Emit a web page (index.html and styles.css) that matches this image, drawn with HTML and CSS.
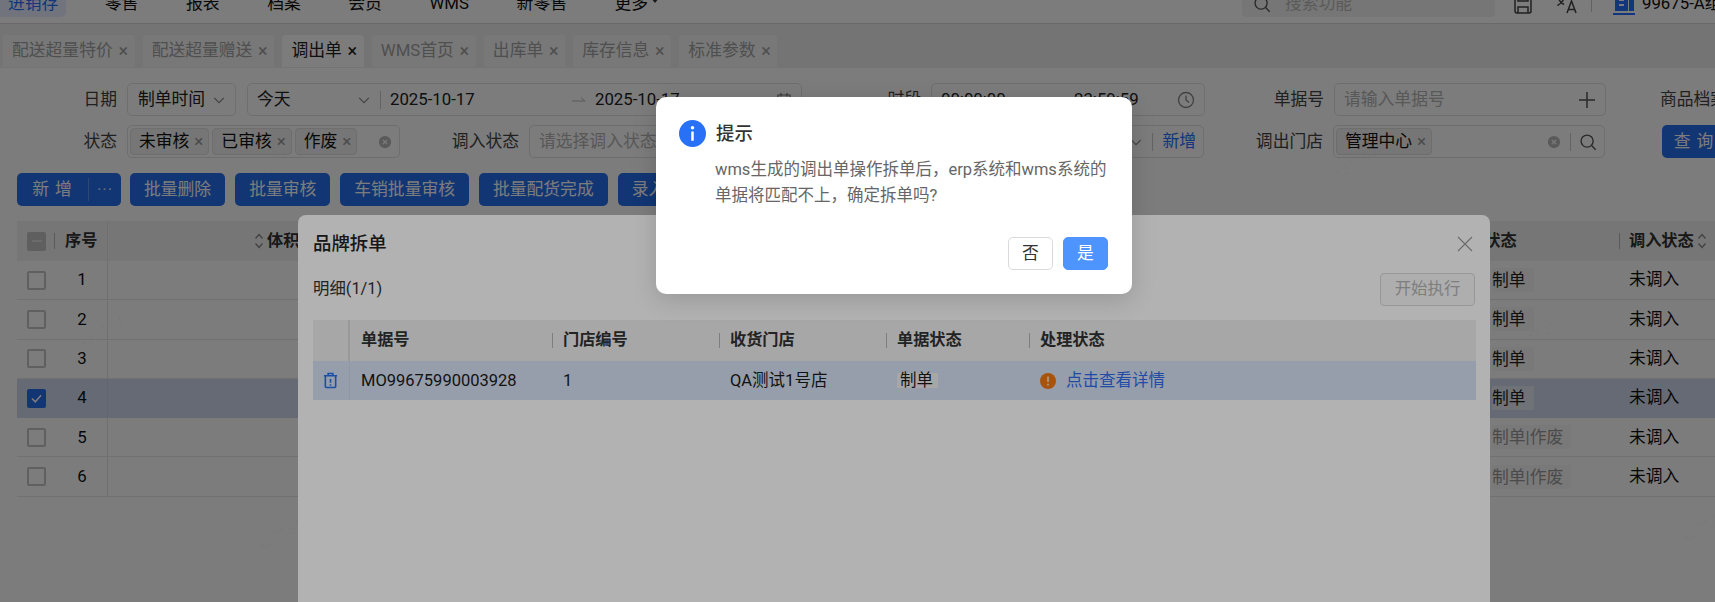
FILE: index.html
```html
<!DOCTYPE html>
<html lang="zh-CN">
<head>
<meta charset="utf-8">
<title>调出单</title>
<link rel="stylesheet" href="styles.css">
</head>
<body>
<svg class="defs" width="0" height="0">
  <symbol id="chev" viewBox="0 0 16 16"><path d="M2.5 5.5 8 11l5.5-5.5" fill="none" stroke="currentColor" stroke-width="1.3"/></symbol>
  <symbol id="sort" viewBox="0 0 10 18"><path d="M1.5 6.5 5 2.5l3.500 4M1.500 11.500 5 15.500l3.500-4" fill="none" stroke="currentColor" stroke-width="1.300"/></symbol>
  <symbol id="clear" viewBox="0 0 16 16"><circle cx="8" cy="8" r="7" fill="currentColor"/><path d="M5.500 5.500l5 5m0-5l-5 5" stroke="#fff" stroke-width="1.400"/></symbol>
  <symbol id="search" viewBox="0 0 20 20"><circle cx="9" cy="9" r="6.700" fill="none" stroke="currentColor" stroke-width="1.500"/><path d="M14 14l4.500 4.500" stroke="currentColor" stroke-width="1.500"/></symbol>
</svg>

<div class="app">
  <header class="nav">
    <nav class="menu">
      <a class="menu-item active">进销存</a>
      <a class="menu-item">零售</a>
      <a class="menu-item">报表</a>
      <a class="menu-item">档案</a>
      <a class="menu-item">会员</a>
      <a class="menu-item">WMS</a>
      <a class="menu-item">新零售</a>
      <a class="menu-item">更多<span class="caret"></span></a>
    </nav>
    <div class="nav-right">
      <div class="search-box"><svg class="ic18 c-dark"><use href="#search"/></svg><span>搜索功能</span></div>
      <svg class="nav-ic" viewBox="0 0 22 22"><path d="M3 3h16v15a2 2 0 0 1-2 2H5a2 2 0 0 1-2-2z M6 20v-6h10v6 M6 3v5h10V3" fill="none" stroke="currentColor" stroke-width="1.500"/></svg>
      <svg class="nav-ic tight" viewBox="0 0 22 22"><path d="M1 5h9M5.500 2v3M8 5c-1 4-3.500 6-6.500 7.500M3 6.500c1 2.500 3 4 5 5M11 20l4.500-12L20 20M12.500 16.500h6" fill="none" stroke="currentColor" stroke-width="1.500"/></svg>
      <span class="nav-sep"></span>
      <svg class="nav-ic blue" viewBox="0 0 22 22"><path d="M2 1h13v17H2zM16 7h5v11h-5zM0 20h22v2H0z" fill="currentColor"/><path d="M6 6h5v2H6zM6 11h5v2H6z" fill="#fff"/></svg>
      <span class="org">99675-A组织管理中心</span>
    </div>
  </header>

  <div class="tabs">
    <div class="tab">配送超量特价<i>×</i></div>
    <div class="tab">配送超量赠送<i>×</i></div>
    <div class="tab current">调出单<i>×</i></div>
    <div class="tab">WMS首页<i>×</i></div>
    <div class="tab">出库单<i>×</i></div>
    <div class="tab">库存信息<i>×</i></div>
    <div class="tab">标准参数<i>×</i></div>
  </div>

  <main class="content">
    <section class="filters">
      <div class="row">
        <label class="lab lab-first">日期</label>
        <div class="ctl w-select"><span class="grow">制单时间</span><svg class="ic14"><use href="#chev"/></svg></div>
        <div class="ctl w-range">
          <span class="range-pre">今天</span><svg class="ic14"><use href="#chev"/></svg><span class="vsep"></span>
          <span class="date">2025-10-17</span>
          <svg class="arrow" viewBox="0 0 14 8"><path d="M0 5h13L9 1.500" fill="none" stroke="currentColor"/></svg>
          <span class="date grow">2025-10-17</span>
          <svg class="ic16" viewBox="0 0 16 16"><path d="M2 3h12v11H2zM2 6.500h12M5 1v3.500M11 1v3.500" fill="none" stroke="currentColor" stroke-width="1.200"/></svg>
        </div>
        <label class="lab lab-118">时段</label>
        <div class="ctl w-time">
          <span class="time-a">00:00:00</span><span class="grow">23:59:59</span>
          <svg class="ic18" viewBox="0 0 18 18"><circle cx="9" cy="9" r="7.500" fill="none" stroke="currentColor" stroke-width="1.300"/><path d="M9 4.500V9l3 2.500" fill="none" stroke="currentColor" stroke-width="1.300"/></svg>
        </div>
        <label class="lab lab-118">单据号</label>
        <div class="ctl w-doc">
          <span class="grow ph">请输入单据号</span>
          <svg class="ic18 c-dark" viewBox="0 0 18 18"><path d="M9 1v16M1 9h16" stroke="currentColor" stroke-width="1.500"/></svg>
        </div>
        <label class="lab lab-end">商品档案</label>
      </div>
      <div class="row">
        <label class="lab lab-first">状态</label>
        <div class="ctl w-status tagged">
          <span class="chip">未审核<i>×</i></span><span class="chip">已审核<i>×</i></span><span class="chip">作废<i>×</i></span>
          <span class="grow"></span>
          <svg class="ic14 c-clear"><use href="#clear"/></svg>
        </div>
        <label class="lab lab-118">调入状态</label>
        <div class="ctl w-in">
          <span class="grow ph">请选择调入状态</span>
          <svg class="ic14"><use href="#chev"/></svg><span class="vsep"></span><span class="link">新增</span>
        </div>
        <label class="lab lab-118">调出门店</label>
        <div class="ctl w-doc tagged">
          <span class="chip">管理中心<i>×</i></span>
          <span class="grow"></span>
          <svg class="ic14 c-clear"><use href="#clear"/></svg><span class="vsep vsep-tight"></span>
          <svg class="ic18 c-dark"><use href="#search"/></svg>
        </div>
        <button class="btn query">查 询</button>
      </div>
    </section>

    <section class="toolbar">
      <div class="btn split"><span class="split-main">新 增</span><span class="split-more">···</span></div>
      <button class="btn">批量删除</button>
      <button class="btn">批量审核</button>
      <button class="btn">车销批量审核</button>
      <button class="btn">批量配货完成</button>
      <button class="btn">录入物流单号</button>
    </section>

    <section class="grid">
      <div class="g-row g-head">
        <div class="g-first"><span class="box partial"></span><span class="head-sep"></span><b>序号</b></div>
        <div class="g-main"><svg class="sort"><use href="#sort"/></svg><b>体积</b></div>
        <div class="g-status"><b>单据状态</b></div>
        <div class="g-in"><span class="head-sep"></span><b>调入状态</b><svg class="sort"><use href="#sort"/></svg></div>
      </div>
      <div class="g-row"><div class="g-first"><span class="box"></span><span class="num">1</span></div><div class="g-main"></div><div class="g-status"><span class="st">制单</span></div><div class="g-in"><span class="in-val">未调入</span></div></div>
      <div class="g-row"><div class="g-first"><span class="box"></span><span class="num">2</span></div><div class="g-main"></div><div class="g-status"><span class="st">制单</span></div><div class="g-in"><span class="in-val">未调入</span></div></div>
      <div class="g-row"><div class="g-first"><span class="box"></span><span class="num">3</span></div><div class="g-main"></div><div class="g-status"><span class="st">制单</span></div><div class="g-in"><span class="in-val">未调入</span></div></div>
      <div class="g-row selected"><div class="g-first"><span class="box checked"><svg viewBox="0 0 18 18"><path d="M3.500 9l4 4 7-8" fill="none" stroke="#fff" stroke-width="1.800"/></svg></span><span class="num">4</span></div><div class="g-main"></div><div class="g-status"><span class="st">制单</span></div><div class="g-in"><span class="in-val">未调入</span></div></div>
      <div class="g-row"><div class="g-first"><span class="box"></span><span class="num">5</span></div><div class="g-main"></div><div class="g-status"><span class="st void">制单|作废</span></div><div class="g-in"><span class="in-val">未调入</span></div></div>
      <div class="g-row"><div class="g-first"><span class="box"></span><span class="num">6</span></div><div class="g-main"></div><div class="g-status"><span class="st void">制单|作废</span></div><div class="g-in"><span class="in-val">未调入</span></div></div>
    </section>
  </main>

  <div class="marks">
    <span class="wm m1">xz71547</span><span class="wm m2">xz71547</span><span class="wm m3">xz71547</span>
    <span class="wm m4">xz71547</span><span class="wm m5">xz71547</span><span class="wm m6">xz71547</span>
    <span class="wm m7">xz71547</span>
  </div>
</div>

<div class="overlay"></div>

<section class="modal">
  <header class="modal-head">
    <h2>品牌拆单</h2>
    <svg class="modal-x" viewBox="0 0 16 16"><path d="M1 1l14 14M15 1 1 15" stroke="currentColor" stroke-width="1.100"/></svg>
  </header>
  <div class="modal-bar">
    <span>明细(1/1)</span>
    <button class="btn-disabled">开始执行</button>
  </div>
  <div class="sub">
    <div class="s-row s-head">
      <div class="s-op"></div>
      <div class="s-c1">单据号</div>
      <div class="s-c2 div">门店编号</div>
      <div class="s-c3 div">收货门店</div>
      <div class="s-c4 div">单据状态</div>
      <div class="s-c5 div">处理状态</div>
    </div>
    <div class="s-row s-body">
      <div class="s-op">
        <svg class="trash" viewBox="0 0 16 18"><path d="M1 4h14M5.500 4V1.500h5V4M2.500 4v11.500a1 1 0 0 0 1 1h9a1 1 0 0 0 1-1V4M8 7.500v4M8 13v1.500" fill="none" stroke="currentColor" stroke-width="1.700"/></svg>
      </div>
      <div class="s-c1">MO99675990003928</div>
      <div class="s-c2">1</div>
      <div class="s-c3">QA测试1号店</div>
      <div class="s-c4"><span class="st-sub">制单</span></div>
      <div class="s-c5">
        <svg class="warn" viewBox="0 0 16 16"><circle cx="8" cy="8" r="8" fill="currentColor"/><path d="M8 3.500v5.500M8 10.800v1.700" stroke="#fff" stroke-width="1.700" opacity=".75"/></svg>
        <span class="detail">点击查看详情</span>
      </div>
    </div>
  </div>
</section>

<div class="overlay"></div>

<section class="dialog">
  <header class="dialog-head">
    <svg class="info" viewBox="0 0 28 28"><circle cx="14" cy="14" r="14" fill="#2871f6"/><circle cx="14" cy="8" r="1.800" fill="#fff"/><path d="M14 12v9.500" stroke="#fff" stroke-width="2.600"/></svg>
    <h3>提示</h3>
  </header>
  <p class="dialog-body">wms生成的调出单操作拆单后，erp系统和wms系统的单据将匹配不上，确定拆单吗?</p>
  <footer class="dialog-foot">
    <button class="d-btn">否</button>
    <button class="d-btn primary">是</button>
  </footer>
  <span class="wm-d d1">xz71547</span>
  <span class="wm-d d2">xz71547</span>
</section>
</body>
</html>
```

FILE: styles.css
```css
* { box-sizing: border-box; }
html, body { margin: 0; height: 100%; }
body {
  width: 1715px;
  height: 602px;
  overflow: hidden;
  position: relative;
  background: #fff;
  font: 16.8px/1.4 Roboto, "Noto Sans CJK SC", sans-serif;
  color: #222;
}
.defs { position: absolute; }
svg { display: block; flex: none; }
i { font-style: normal; }
button { font: inherit; }

.app { margin-top: -16px; width: 1715px; white-space: nowrap; position: relative; height: 618px; overflow: hidden; }

/* nav */
.nav { height: 40px; display: flex; justify-content: space-between; border-bottom: 1px solid #d8d8d8; }
.menu { display: flex; align-items: center; height: 39px; }
.menu-item { display: flex; align-items: center; height: 100%; padding: 0 23.8px; color: #111; }
.menu-item.active { width: 66px; padding: 6px 0 0 8px; margin-right: 15px; height: 33px; align-self: flex-start; background: #eaf0ff; color: #2670ff; border-radius: 0 0 5px 0; }
.caret { width: 0; height: 0; margin-left: 3px; margin-top: -6px; border: 4px solid transparent; border-top: 5px solid #333; border-bottom: 0; }
.nav-right { display: flex; align-items: center; height: 39px; width: 473px; flex: none; }
.search-box { display: flex; align-items: center; gap: 14px; width: 253px; height: 33px; align-self: flex-start; padding: 6px 0 0 11px; margin-right: 17px; background: #f2f2f2; border-radius: 4px; color: #bbb; }
.ic18 { width: 18px; height: 18px; color: #888; }
.ic14 { width: 14px; height: 14px; color: #888; }
.ic16 { width: 16px; height: 16px; color: #777; }
.c-dark { color: #555; }
.c-clear { color: #bbb; }
.nav-ic { width: 22px; height: 22px; margin-right: 22px; color: #444; }
.nav-ic.tight { margin-right: 13px; }
.nav-ic.blue { color: #2670ff; margin-right: 7px; }
.nav-sep { width: 1px; height: 16px; background: #ccc; margin-right: 21px; }
.org { color: #111; width: 73px; overflow: hidden; }

/* tabs */
.tabs { height: 44px; background: #f0f0f0; display: flex; align-items: flex-end; gap: 8px; padding: 0 0 1px 3px; }
.tab { height: 32px; padding: 0 5px 0 9px; display: flex; align-items: center; background: #f8f8f8; border-radius: 4px 4px 0 0; color: #a3a3a3; }
.tab i { margin-left: 4px; width: 13px; font-size: 18px; text-align: center; }
.tab.current { background: #fff; color: #222; }
.tab.current i { color: #222; }

/* filters */
.content { padding: 15px 0 0 17px; }
.filters { display: flex; flex-direction: column; gap: 9px; }
.row { display: flex; height: 33px; align-items: stretch; }
.lab { display: flex; align-items: center; justify-content: flex-end; margin-right: 10px; color: #444; flex: none; }
.lab-first { width: 100px; }
.lab-118 { width: 119px; }
.lab-end { justify-content: flex-start; margin-left: 54px; }
.ctl { display: flex; align-items: center; height: 33px; border: 1px solid #e3e3e3; border-radius: 5px; padding: 0 9px; background: #fff; color: #222; flex: none; }
.grow { flex: 1; }
.ph { color: #b5b5b5; }
.w-select { width: 109px; margin-right: 11px; padding-left: 10px; }
.w-range { width: 555px; }
.range-pre { width: 100px; }
.vsep { width: 1px; height: 18px; background: #ccc; margin: 0 9px; }
.vsep-tight { margin: 0 5px 0 6px; }
.date { width: 176px; }
.arrow { width: 14px; height: 8px; color: #bbb; margin: 0 9px 0 6px; }
.w-range .date:first-of-type { width: 192px; }
.w-time { width: 274px; }
.time-a { width: 133px; }
.w-doc { width: 272px; }
.w-status { width: 273px; }
.tagged { padding: 0 7px 0 2px; gap: 3px; }
.chip { display: inline-flex; align-items: center; height: 27px; padding: 0 4px 0 8px; background: #f2f2f2; border: 1px solid #e3e3e3; border-radius: 4px; color: #111; }
.chip i { margin-left: 4px; width: 11px; text-align: center; color: #999; font-size: 17px; }
.w-in { width: 675px; padding-right: 7px; }
.link { color: #2670ff; }
.btn { display: inline-flex; align-items: center; justify-content: center; border: 0; height: 33px; background: #2670f0; color: #fff; border-radius: 5px; padding: 0 14px; flex: none; }
.query { width: 64px; margin-left: 57px; padding: 0; letter-spacing: 1px; }

/* toolbar */
.toolbar { display: flex; gap: 10px; margin-top: 15px; height: 33px; }
.split { padding: 0; width: 104px; margin-right: -1px; }
.split-main { flex: 1; text-align: center; letter-spacing: 1px; border-right: 1px solid #5a94f5; }
.split-more { width: 32px; text-align: center; letter-spacing: 1px; color: #cfe0ff; }

/* grid */
.grid { margin-top: 15px; width: 1698px; }
.g-row { display: flex; height: 39.3px; border-bottom: 1px solid #e8e8e8; align-items: stretch; }
.g-head { height: 40px; background: #f2f2f2; border-bottom: 0; }
.g-head b { font-weight: 700; color: #333; font-size: 16.2px; }
.g-row > div { display: flex; align-items: center; }
.g-first { width: 91px; padding-left: 10px; border-right: 1px solid #e4e4e4; }
.g-main { width: 1332px; padding-left: 146px; }
.g-status { width: 179px; padding-left: 52px; }
.g-head .g-status { padding-left: 12px; }
.g-in { width: 96px; padding-left: 10px; position: relative; }
.box { width: 19px; height: 19px; border: 2px solid #c6c6c6; border-radius: 2px; background: #fff; display: block; flex: none; }
.box.partial { background: #c4c4c4 linear-gradient(#ddd,#ddd) center/10px 2px no-repeat; border-color: #c4c4c4; }
.box.checked { background: #2670f0; border-color: #2670f0; }
.box.checked svg { width: 15px; height: 15px; }
.head-sep { width: 1px; height: 16px; background: #bbb; margin: 0 10px 0 8px; flex: none; }
.g-in .head-sep { position: absolute; left: 0; margin: 0; }
.num { width: 53px; padding-left: 26px; text-align: center; color: #111; flex: none; margin-left: -3.5px; }
.sort { width: 10px; height: 18px; color: #888; margin-right: 3px; }
.g-in .sort { margin-left: 3px; margin-right: 0; }
.st { background: #fafafa; padding-right: 8px; color: #222; line-height: 24px; }
.st.void { color: #999; }
.in-val { color: #111; }
.selected { background: #d0dcf0; border-bottom-color: #d0dcf0; }
.selected .g-first { border-right-color: #c8d4e8; }
.selected .st { background: #e4ecf8; }

/* watermarks */
.marks { position: absolute; inset: 0; pointer-events: none; }
.wm, .wm-d { position: absolute; font: italic 15px Roboto, sans-serif; color: rgba(0,0,0,.03); transform: rotate(-28deg); }
.m1 { left: 78px; top: 338px; }
.m2 { left: 258px; top: 168px; }
.m3 { left: 618px; top: 166px; }
.m4 { left: 1332px; top: 168px; }
.m5 { left: 1505px; top: 346px; }
.m6 { left: 1680px; top: 532px; }
.m7 { left: 256px; top: 540px; }

/* overlay */
.overlay { position: absolute; inset: 0; background: rgba(0,0,0,.3); }

/* modal */
.modal { position: absolute; left: 298px; top: 215px; width: 1192px; height: 387px; background: #fff; border-radius: 8px 8px 0 0; padding: 0 15px; }
.modal-head { height: 58px; display: flex; align-items: center; justify-content: space-between; padding-right: 2px; }
.modal-head h2 { margin: 0; font-size: 18.400px; font-weight: 500; color: #222; }
.modal-x { width: 16px; height: 16px; color: #999; margin-top: -1px; }
.modal-bar { display: flex; align-items: center; justify-content: space-between; height: 33px; color: #333; font-size: 16.400px; }
.btn-disabled { width: 95px; height: 33px; background: #fafafa; border: 1px solid #d9d9d9; border-radius: 4px; color: #b5b5b5; }
.sub { margin-top: 14px; width: 1163px; }
.s-row { display: flex; align-items: stretch; }
.s-head { height: 41px; background: #f0f0f0; font-weight: 700; color: #333; font-size: 16.2px; }
.s-body { height: 39px; background: #d8e2f5; color: #1a1a1a; font-size: 16.500px; }
.s-row > div { display: flex; align-items: center; padding-left: 11px; position: relative; }
.s-op { width: 37px; border-right: 2px solid #dcdcdc; padding-left: 10px !important; }
.s-body .s-op { border-right: 1px solid #d0daec; }
.s-c1 { width: 202px; }
.s-c2 { width: 167px; }
.s-c3 { width: 167px; }
.s-c4 { width: 143px; }
.s-c5 { flex: 1; }
.div::before { content: ""; position: absolute; left: 0; top: 13px; height: 15px; width: 1px; background: #b5b5b5; }
.trash { width: 15px; height: 17px; color: #2670f0; }
.st-sub { background: #f0f0f0; padding: 0 5px 0 3px; line-height: 15px; }
.warn { width: 16px; height: 16px; color: #f07810; margin-right: 10px; }
.detail { color: #2f6cf0; }

/* dialog */
.dialog { position: absolute; left: 656px; top: 97px; width: 476px; height: 197px; background: #fff; border-radius: 10px; box-shadow: 0 6px 24px rgba(0,0,0,.15); padding: 23px 24px 0 23px; overflow: hidden; }
.dialog-head { display: flex; align-items: center; gap: 10px; height: 27px; }
.info { width: 27px; height: 27px; }
.dialog-head h3 { margin: 0; font-size: 18.400px; font-weight: 500; color: #333; }
.dialog-body { margin: 10px 0 0 36px; width: 395px; font-size: 16.500px; line-height: 26px; color: #666; white-space: normal; }
.dialog-foot { display: flex; justify-content: flex-end; gap: 10px; margin-top: 28px; }
.d-btn { width: 45px; height: 33px; background: #fff; border: 1px solid #d9d9d9; border-radius: 5px; color: #333; padding: 0; }
.d-btn.primary { background: #4e94ff; border-color: #4e94ff; color: #fff; }
.wm-d { color: rgba(0,0,0,.025); }
.d1 { left: 315px; top: 50px; }
.d2 { left: 25px; top: 125px; }
```
